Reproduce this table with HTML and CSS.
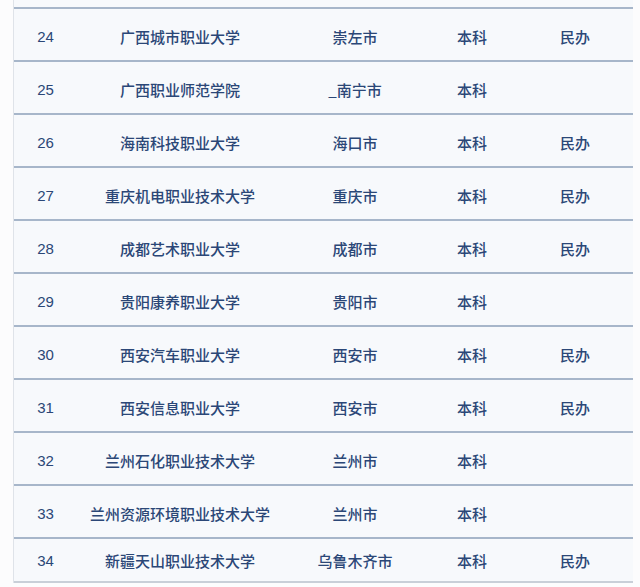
FILE: index.html
```html
<!DOCTYPE html>
<html lang="zh">
<head>
<meta charset="utf-8">
<link rel="stylesheet" href="styles.css">
</head>
<body>
<div class="sheet">
  <div class="lead"></div>
  <div class="row"><span class="no">24</span><span>广西城市职业大学</span><span>崇左市</span><span>本科</span><span>民办</span></div>
  <div class="row"><span class="no">25</span><span>广西职业师范学院</span><span>_南宁市</span><span>本科</span><span></span></div>
  <div class="row"><span class="no">26</span><span>海南科技职业大学</span><span>海口市</span><span>本科</span><span>民办</span></div>
  <div class="row"><span class="no">27</span><span>重庆机电职业技术大学</span><span>重庆市</span><span>本科</span><span>民办</span></div>
  <div class="row"><span class="no">28</span><span>成都艺术职业大学</span><span>成都市</span><span>本科</span><span>民办</span></div>
  <div class="row"><span class="no">29</span><span>贵阳康养职业大学</span><span>贵阳市</span><span>本科</span><span></span></div>
  <div class="row"><span class="no">30</span><span>西安汽车职业大学</span><span>西安市</span><span>本科</span><span>民办</span></div>
  <div class="row"><span class="no">31</span><span>西安信息职业大学</span><span>西安市</span><span>本科</span><span>民办</span></div>
  <div class="row"><span class="no">32</span><span>兰州石化职业技术大学</span><span>兰州市</span><span>本科</span><span></span></div>
  <div class="row"><span class="no">33</span><span>兰州资源环境职业技术大学</span><span>兰州市</span><span>本科</span><span></span></div>
  <div class="row last"><span class="no">34</span><span>新疆天山职业技术大学</span><span>乌鲁木齐市</span><span>本科</span><span>民办</span></div>
</div>
</body>
</html>
```
FILE: styles.css
```css
html, body {
  margin: 0;
  padding: 0;
  background: #fcfcfd;
}
.sheet {
  margin-left: 13px;
  width: 619px;
  border-left: 1px solid #dfe3e9;
  background: #f7f9fc;
  font-family: "Noto Sans CJK SC", sans-serif;
  font-size: 15px;
  color: #2b4777;
}
.lead {
  height: 7px;
}
.row {
  box-sizing: border-box;
  height: 53px;
  border-top: 2px solid #a7b6ca;
  display: grid;
  grid-template-columns: 63px 206px 144px 90px 116px;
  align-items: center;
  padding-top: 3px;
}
.row span {
  text-align: center;
  white-space: nowrap;
  font-weight: 500;
}
.row .no {
  font-family: "Liberation Sans", Arial, sans-serif;
  font-size: 15px;
  font-weight: 400;
}
.row.last {
  height: 46px;
  border-bottom: 2px solid #c9cfd8;
  padding-top: 0;
}
```
